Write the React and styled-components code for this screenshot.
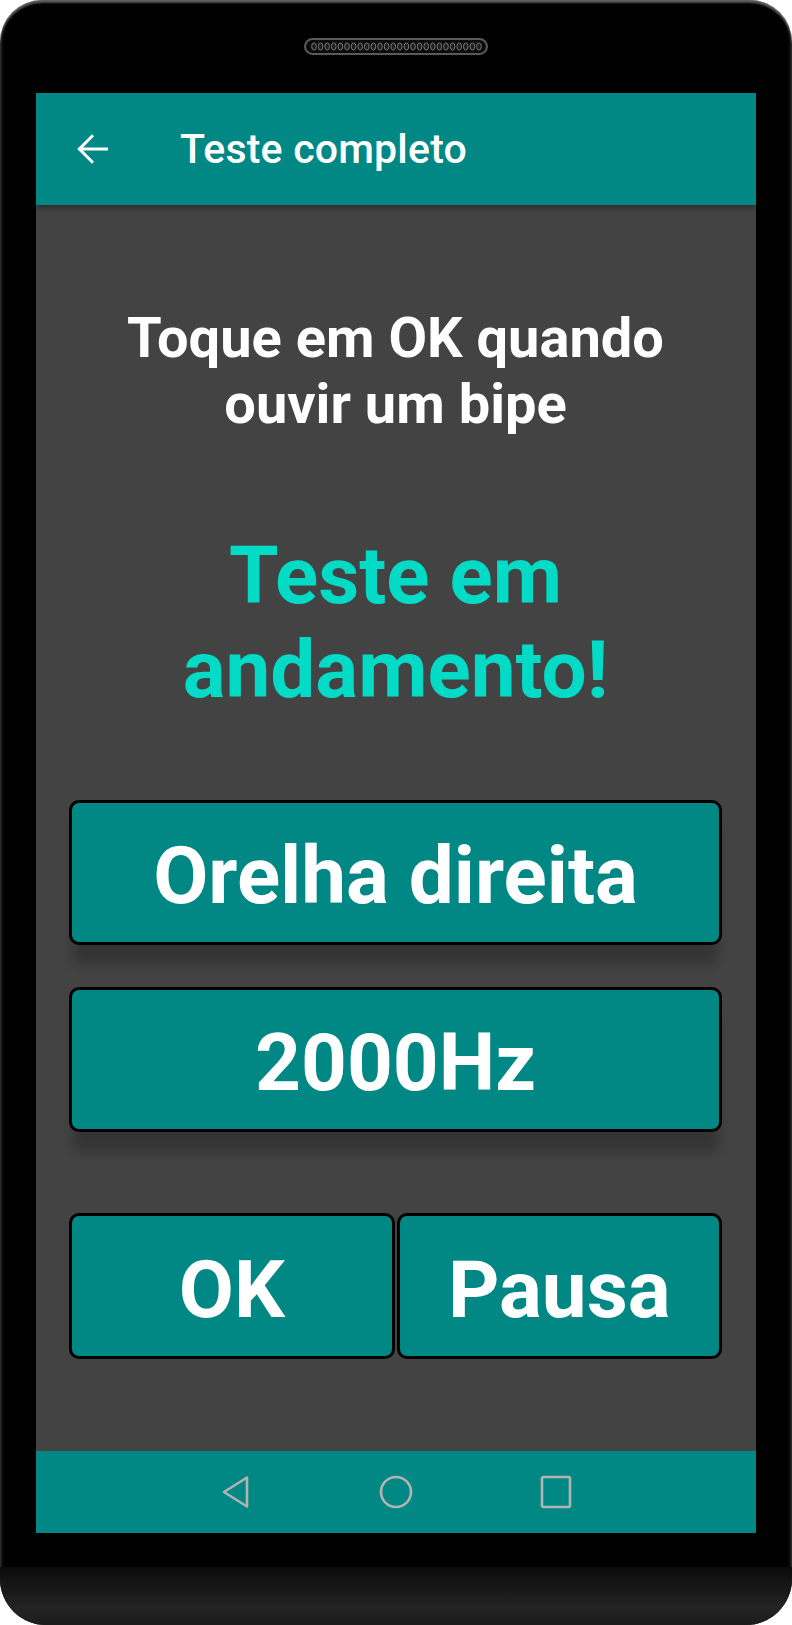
import React from 'react';
import styled, { createGlobalStyle } from 'styled-components';

const GlobalStyle = createGlobalStyle`
  html, body {
    margin: 0;
    padding: 0;
    background: #ffffff;
  }
  * {
    box-sizing: border-box;
  }
`;

const TEAL = '#028884';

const Phone = styled.div`
  width: 792px;
  height: 1625px;
  display: flex;
  flex-direction: column;
  background: #000;
  border-radius: 42px 42px 46px 46px;
  box-shadow: inset 0 3px 2px rgba(255, 255, 255, 0.32), inset 2px 0 3px rgba(255, 255, 255, 0.12), inset -2px 0 3px rgba(255, 255, 255, 0.12);
  overflow: hidden;
  font-family: Roboto, "Noto Sans", sans-serif;
`;

const TopBezel = styled.div`
  height: 93px;
  display: flex;
  justify-content: center;
  padding-top: 38px;
`;

const Screen = styled.div`
  height: 1440px;
  margin: 0 36px;
  display: flex;
  flex-direction: column;
  background: #434343;
`;

const Header = styled.header`
  height: 112px;
  flex: 0 0 112px;
  display: flex;
  align-items: center;
  padding-left: 32px;
  background: ${TEAL};
  box-shadow: 0 3px 6px rgba(0, 0, 0, 0.35);
  position: relative;
  z-index: 1;
`;

const Title = styled.h1`
  margin: 0 0 0 64px;
  font-size: 41px;
  font-weight: 500;
  color: #ffffff;
  letter-spacing: 0.2px;
`;

const Content = styled.main`
  flex: 1;
  display: flex;
  flex-direction: column;
  align-items: stretch;
  padding: 0 34px 0 33px;
`;

const Prompt = styled.p`
  margin: 100px 0 0;
  text-align: center;
  font-size: 56px;
  line-height: 66px;
  font-weight: 700;
  color: #ffffff;
`;

const Status = styled.p`
  margin: 92px 0 0;
  text-align: center;
  font-size: 80px;
  line-height: 94px;
  font-weight: 700;
  color: #03dbc6;
`;

const Box = styled.div`
  height: ${p => p.h || 145}px;
  margin-top: ${p => p.top}px;
  padding-top: 7px;
  display: flex;
  align-items: center;
  justify-content: center;
  background: ${TEAL};
  border: 3px solid #000;
  border-radius: 10px;
  color: #ffffff;
  font-size: 80px;
  font-weight: 700;
  box-shadow: ${p => (p.raised ? '0 24px 12px -4px rgba(0, 0, 0, 0.22)' : 'none')};
`;

const Row = styled.div`
  margin-top: 81px;
  display: grid;
  grid-template-columns: 1fr 1fr;
  gap: 2px;
`;

const NavBar = styled.nav`
  height: 82px;
  flex: 0 0 82px;
  display: flex;
  align-items: center;
  justify-content: center;
  gap: 120px;
  background: ${TEAL};
`;

const NavSlot = styled.div`
  width: 40px;
  height: 40px;
  display: flex;
  align-items: center;
  justify-content: center;
`;

const BottomBezel = styled.div`
  height: 34px;
`;

const Chin = styled.div`
  height: 58px;
  background: linear-gradient(#0c0c0c 0%, #1a1a1a 45%, #242424 70%, #1b1b1b 100%);
`;

const Speaker = () => {
  const dots = [];
  for (let i = 0; i < 26; i++) {
    dots.push(<ellipse key={i} cx={10 + i * 6.6} cy={8.5} rx={2.3} ry={3.6} fill="#1c1c1c" stroke="#7a7a7a" strokeWidth={1} />);
  }
  return (
    <svg width="184" height="17" viewBox="0 0 184 17">
      <rect x="1" y="1" width="182" height="15" rx="7.5" fill="#0b0b0b" stroke="#5a5a5a" strokeWidth="2" />
      {dots}
    </svg>
  );
};

const BackArrow = () => (
  <svg width="48" height="48" viewBox="0 0 24 24">
    <path fill="#ffffff" d="M20 11.2H7.5l5.5-5.6-1-1L4.6 12l7.4 7.4 1-1-5.5-5.6H20z" />
  </svg>
);

const ICON = '#b3b3b3';

const App = () => (
  <>
    <GlobalStyle />
    <Phone>
      <TopBezel>
        <Speaker />
      </TopBezel>
      <Screen>
        <Header>
          <BackArrow />
          <Title>Teste completo</Title>
        </Header>
        <Content>
          <Prompt>
            Toque em OK quando
            <br />
            ouvir um bipe
          </Prompt>
          <Status>
            Teste em
            <br />
            andamento!
          </Status>
          <Box top={83} raised>Orelha direita</Box>
          <Box top={42} raised>2000Hz</Box>
          <Row>
            <Box top={0} h={146}>OK</Box>
            <Box top={0} h={146}>Pausa</Box>
          </Row>
        </Content>
        <NavBar>
          <NavSlot>
            <svg width="30" height="34" viewBox="0 0 30 34">
              <path d="M26 2.5 L3 17 L26 31.5 Z" fill="none" stroke={ICON} strokeWidth="2.6" strokeLinejoin="round" />
            </svg>
          </NavSlot>
          <NavSlot>
            <svg width="34" height="34" viewBox="0 0 34 34">
              <circle cx="17" cy="17" r="15" fill="none" stroke={ICON} strokeWidth="2.6" />
            </svg>
          </NavSlot>
          <NavSlot>
            <svg width="32" height="34" viewBox="0 0 32 34">
              <rect x="2" y="2" width="28" height="30" rx="1.5" fill="none" stroke={ICON} strokeWidth="2.6" />
            </svg>
          </NavSlot>
        </NavBar>
      </Screen>
      <BottomBezel />
      <Chin />
    </Phone>
  </>
);

export default App;
